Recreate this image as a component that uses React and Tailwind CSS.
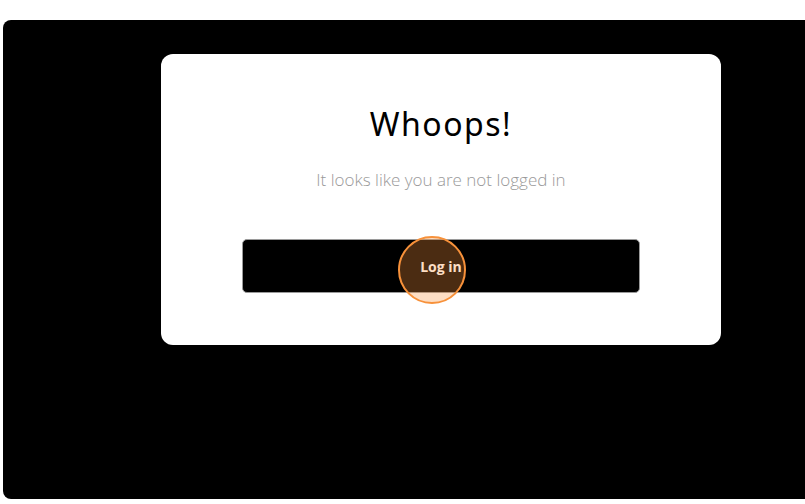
export default function App() {
  return (
    <div className="h-[504px] w-[805px] overflow-hidden bg-white pt-5 pl-[3px]">
      <div className="h-[479px] w-[900px] rounded-l-lg bg-black pl-[158px] pt-[34px]">
        <div className="flex h-[291px] w-[560px] flex-col items-center rounded-xl bg-white px-[81px] pt-[50px]">
          <h1 className="text-[32px] leading-[40px] font-normal tracking-[1.5px] text-black [font-family:'Noto_Sans',sans-serif]">
            Whoops!
          </h1>
          <p className="mt-[24px] text-[17px] leading-[24px] font-light text-[#999] [font-family:'Open_Sans',sans-serif]">
            It looks like you are not logged in
          </p>
          <div className="relative mt-[47px] w-full">
            <button className="flex h-[54px] w-full items-center justify-center rounded-[5px] border border-[#9a9a9a] bg-black text-[14px] font-bold text-white [font-family:'Open_Sans',sans-serif]">
              Log in
            </button>
            <div className="pointer-events-none absolute top-[-3px] left-[156px] h-[68px] w-[68px] rounded-full border-2 border-[#f7913a] bg-[#f7913a]/30" />
          </div>
        </div>
      </div>
    </div>
  );
}
